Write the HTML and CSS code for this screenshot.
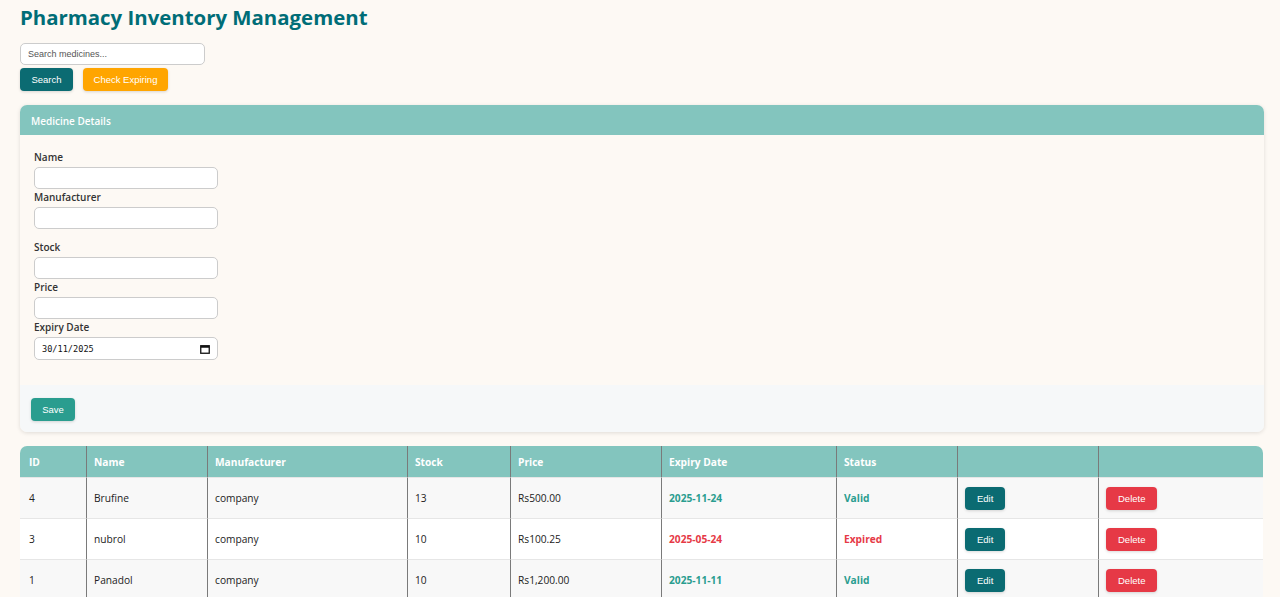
FILE: index.html
```html
<!DOCTYPE html>
<html lang="en">
<head>
<meta charset="utf-8">
<title>Pharmacy Inventory Management</title>
<link rel="stylesheet" href="styles.css">
</head>
<body>
<div class="page">
  <h1 class="title">Pharmacy Inventory Management</h1>
  <div class="search">
    <input class="search-input" type="text" placeholder="Search medicines...">
    <div class="search-actions">
      <button class="btn btn-teal btn-search">Search</button>
      <button class="btn btn-orange btn-expiring">Check Expiring</button>
    </div>
  </div>

  <div class="card">
    <div class="card-header">Medicine Details</div>
    <div class="card-body">
      <div class="group">
        <label class="label">Name</label>
        <input class="field" type="text">
        <label class="label">Manufacturer</label>
        <input class="field" type="text">
      </div>
      <div class="group">
        <label class="label">Stock</label>
        <input class="field" type="text">
        <label class="label">Price</label>
        <input class="field" type="text">
        <label class="label">Expiry Date</label>
        <div class="date-field">
          <input class="date-text" type="text" value="30/11/2025">
          <svg class="cal" width="10" height="10" viewBox="0 0 10 10"><rect x="0.75" y="1.75" width="8.5" height="7.5" fill="none" stroke="#111" stroke-width="1.3"/><rect x="0.75" y="1.75" width="8.5" height="2" fill="#111"/></svg>
        </div>
      </div>
    </div>
    <div class="card-footer">
      <button class="btn btn-save">Save</button>
    </div>
  </div>

  <table class="table">
    <thead>
      <tr>
        <th class="c-id">ID</th>
        <th class="c-name">Name</th>
        <th class="c-man">Manufacturer</th>
        <th class="c-stock">Stock</th>
        <th class="c-price">Price</th>
        <th class="c-exp">Expiry Date</th>
        <th class="c-status">Status</th>
        <th class="c-edit"></th>
        <th class="c-del"></th>
      </tr>
    </thead>
    <tbody>
      <tr>
        <td>4</td><td>Brufine</td><td>company</td><td>13</td><td>Rs500.00</td>
        <td class="ok">2025-11-24</td><td class="ok">Valid</td>
        <td><button class="btn btn-teal btn-row">Edit</button></td>
        <td><button class="btn btn-red btn-row">Delete</button></td>
      </tr>
      <tr>
        <td>3</td><td>nubrol</td><td>company</td><td>10</td><td>Rs100.25</td>
        <td class="bad">2025-05-24</td><td class="bad">Expired</td>
        <td><button class="btn btn-teal btn-row">Edit</button></td>
        <td><button class="btn btn-red btn-row">Delete</button></td>
      </tr>
      <tr>
        <td>1</td><td>Panadol</td><td>company</td><td>10</td><td>Rs1,200.00</td>
        <td class="ok">2025-11-11</td><td class="ok">Valid</td>
        <td><button class="btn btn-teal btn-row">Edit</button></td>
        <td><button class="btn btn-red btn-row">Delete</button></td>
      </tr>
    </tbody>
  </table>
</div>
</body>
</html>
```

FILE: styles.css
```css
* { box-sizing: border-box; }
html, body { margin: 0; padding: 0; }
body {
  background: #fdf9f4;
  font-family: "Open Sans", "Noto Sans", sans-serif;
  color: #222;
  height: 597px;
  overflow: hidden;
}
.page { padding: 4px 16px 0 20px; }
.title {
  margin: 0;
  font-family: "Open Sans", sans-serif;
  font-weight: 700;
  font-size: 20.4px;
  line-height: 26px;
  color: #006d77;
}
.search { margin-top: 13px; display: flex; flex-direction: column; gap: 3px; }
.search-input {
  width: 185px; height: 22px;
  border: 1px solid #ccc; border-radius: 5px;
  padding: 0 7px;
  font-family: "Liberation Sans", Arial, sans-serif;
  font-size: 9px;
  background: #fff;
}
.search-input::placeholder { color: #555; }
.search-actions { display: flex; gap: 10px; }
.btn {
  border: none; border-radius: 4px;
  font-family: "Liberation Sans", Arial, sans-serif;
  font-size: 9.5px;
  color: #fff;
  height: 23px;
  padding: 0 12px;
  white-space: nowrap;
  box-shadow: 0 1px 3px rgba(0,0,0,0.15);
}
.btn-teal { background: #0b6b72; }
.btn-orange { background: #ffa500; }
.btn-red { background: #e63946; }
.btn-save { background: #2a9d8f; padding: 0; width: 44px; }
.btn-search { width: 53px; padding: 0; }
.btn-expiring { width: 85px; padding: 0; }

.card {
  margin-top: 14px;
  border-radius: 7px;
  overflow: hidden;
  box-shadow: 0 1px 4px rgba(0,0,0,0.12);
  background: #fdf9f4;
}
.card-header {
  background: #83c5be;
  color: #fff;
  font-weight: 600;
  font-size: 10px;
  height: 30px;
  padding: 1px 11px 0;
  display: flex; align-items: center;
}
.card-body { padding: 14px 14px 25px; display: flex; flex-direction: column; gap: 10px; }
.group { display: flex; flex-direction: column; align-items: flex-start; }
.label {
  font-size: 10px;
  font-weight: 600;
  color: #333;
  line-height: 16px;
  margin-bottom: 2px;
}
.field {
  width: 184px; height: 22px;
  border: 1px solid #ccc; border-radius: 5px;
  background: #fff;
}
.date-field {
  width: 184px; height: 23px;
  border: 1px solid #ccc; border-radius: 5px;
  background: #fff;
  display: flex; align-items: center;
  padding: 0 7px 0 7px;
}
.date-text {
  border: none; outline: none; padding: 0;
  background: transparent;
  font-family: "DejaVu Sans Mono", monospace;
  font-size: 8.6px;
  color: #111;
  flex: 1; min-width: 0;
}
.cal { flex: none; }
.card-footer { background: #f6f8f9; padding: 13px 11px 11px; display: flex; }

.table {
  margin-top: 14px;
  width: 1243px;
  border-collapse: separate;
  border-spacing: 0;
  border-radius: 7px 7px 0 0;
  overflow: hidden;
  font-size: 10.2px;
}
.table th {
  background: #83c5be;
  color: #fff;
  font-weight: 700;
  text-align: left;
  height: 31px;
  padding: 0 7px;
  border-left: 1px solid #7a7a7a;
}
.table td {
  height: 41px;
  padding: 0 7px;
  border-left: 1px solid #7a7a7a;
  border-top: 1px solid #e6e6e6;
  color: #222;
}
.table th:first-child, .table td:first-child { border-left: none; padding-left: 9px; }
.table tbody tr:nth-child(odd) td { background: #f8f8f8; }
.table tbody tr:nth-child(even) td { background: #fff; }
.table td.ok { color: #2a9d8f; font-weight: 700; }
.table td.bad { color: #e63946; font-weight: 700; }
.btn-row { height: 23px; padding: 0 12px; font-size: 9.5px; }
.c-id { width: 66px; }
.c-name { width: 121px; }
.c-man { width: 200px; }
.c-stock { width: 103px; }
.c-price { width: 151px; }
.c-exp { width: 175px; }
.c-status { width: 121px; }
.c-edit { width: 141px; }
.c-del { width: 165px; }
```
